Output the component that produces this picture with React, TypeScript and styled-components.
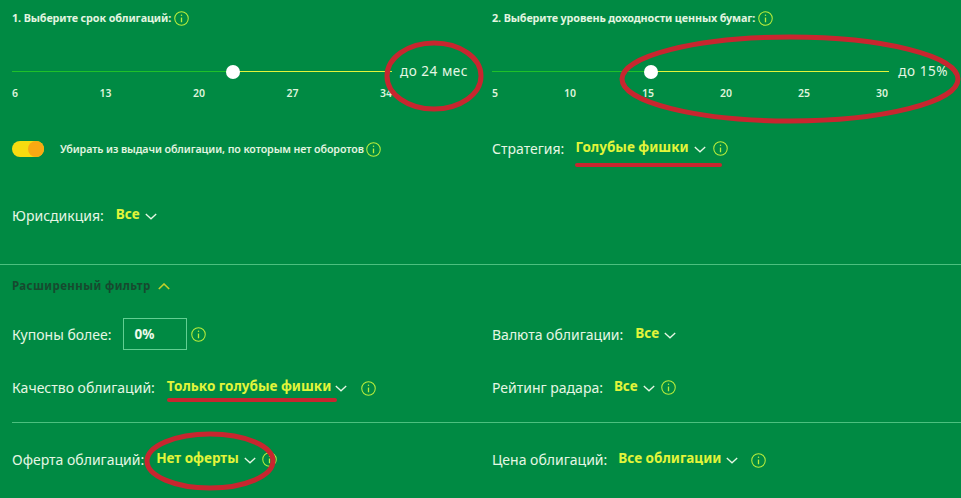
import React from "react";
import styled, { createGlobalStyle } from "styled-components";

const Global = createGlobalStyle`
  html, body { margin: 0; padding: 0; background: #008a43; }
  body { width: 961px; height: 498px; overflow: hidden; font-family: "Noto Sans", "Open Sans", sans-serif; }
`;

const Page = styled.div`
  position: relative;
  width: 961px;
  height: 498px;
  background: #008a43;
  color: #e6f7e4;
  overflow: hidden;
`;

const Columns = styled.div<{ $h: number }>`
  display: grid;
  grid-template-columns: 480px 481px;
  height: ${(p) => p.$h}px;
  padding-left: 12px;
  box-sizing: border-box;
`;

const Column = styled.div`
  display: flex;
  flex-direction: column;
  min-width: 0;
`;

const StepTitle = styled.div`
  display: flex;
  align-items: center;
  gap: 3px;
  height: 14px;
  margin-top: 11px;
  font-size: 10.8px;
  font-weight: 700;
  line-height: 14px;
  color: #e3f5e0;
  letter-spacing: -0.12px;
`;

const SliderRow = styled.div<{ $w: number }>`
  display: flex;
  align-items: center;
  height: 20px;
  margin-top: 36px;
  width: ${(p) => p.$w}px;
`;

const Track = styled.div`
  position: relative;
  flex: 1;
  height: 1px;
  margin-top: 1px;
  background: #e2f53a;
`;

const TrackFill = styled.div<{ $w: number }>`
  position: absolute;
  left: 0;
  top: 0;
  height: 1px;
  width: ${(p) => p.$w}px;
  background: #1fc02a;
`;

const Thumb = styled.div<{ $x: number }>`
  position: absolute;
  left: ${(p) => p.$x - 7}px;
  top: -6px;
  width: 14px;
  height: 14px;
  border-radius: 50%;
  background: #fff;
`;

const SliderValue = styled.div<{ $gap: number }>`
  margin-left: ${(p) => p.$gap}px;
  font-size: 13.5px;
  line-height: 20px;
  letter-spacing: 0.55px;
  white-space: nowrap;
  color: #e6f7e4;
`;

const Ticks = styled.div<{ $w: number }>`
  display: flex;
  justify-content: space-between;
  width: ${(p) => p.$w}px;
  height: 14px;
  margin-top: 5px;
`;

const Tick = styled.span`
  font-size: 10.5px;
  font-weight: 600;
  line-height: 14px;
  color: #dff3dc;
`;

const Row = styled.div<{ $top: number; $h?: number }>`
  display: flex;
  align-items: center;
  height: ${(p) => p.$h ?? 24}px;
  margin-top: ${(p) => p.$top}px;
  white-space: nowrap;
`;

const Toggle = styled.div`
  position: relative;
  width: 32px;
  height: 16px;
  border-radius: 8px;
  background: #f7dc10;
  margin-right: 16px;
`;

const ToggleKnob = styled.div`
  position: absolute;
  right: 0;
  top: 0;
  width: 16px;
  height: 16px;
  border-radius: 50%;
  background: #f9a913;
`;

const ToggleText = styled.span`
  font-size: 10.7px;
  font-weight: 600;
  letter-spacing: -0.1px;
  color: #e3f5e0;
`;

const Label = styled.span`
  font-size: 14px;
  color: #e6f7e4;
`;

const Value = styled.span<{ $ml: number }>`
  margin-left: ${(p) => p.$ml}px;
  margin-bottom: 2px;
  font-size: 13.5px;
  font-weight: 700;
  color: #e2f53a;
`;

const Chevron = styled.svg<{ $ml?: number }>`
  margin-left: ${(p) => p.$ml ?? 5}px;
  margin-top: 3px;
  flex: none;
`;

const InfoWrap = styled.svg<{ $ml: number; $mt?: number }>`
  margin-left: ${(p) => p.$ml}px;
  margin-top: ${(p) => p.$mt ?? 0}px;
  flex: none;
`;

const FullDivider = styled.div`
  height: 1px;
  background: #4cc07f;
`;

const InsetDivider = styled.div`
  height: 1px;
  margin-left: 12px;
  background: #4cc07f;
`;

const AdvancedTitle = styled.div`
  display: flex;
  align-items: center;
  height: 16px;
  margin: 12px 0 0 12px;
  font-size: 11.5px;
  font-weight: 700;
  letter-spacing: 0.4px;
  color: #17492f;
`;

const PercentInput = styled.div`
  box-sizing: border-box;
  width: 64px;
  height: 32px;
  margin-left: 12px;
  padding-left: 10px;
  border: 1px solid #62cf92;
  font-size: 13.5px;
  font-weight: 700;
  line-height: 30px;
  color: #eefaea;
`;

const Overlay = styled.svg`
  position: absolute;
  inset: 0;
  pointer-events: none;
`;

const Info = ({ ml, mt, size = 15, color = "#b9ee3c" }: { ml: number; mt?: number; size?: number; color?: string }) => (
  <InfoWrap $ml={ml} $mt={mt} width={size} height={size} viewBox="0 0 16 16" fill="none" stroke={color} strokeWidth="1.1">
    <circle cx="8" cy="8" r="7.2" />
    <path d="M8 7v5" strokeWidth="1.4" />
    <circle cx="8" cy="4.5" r="0.8" fill={color} stroke="none" />
  </InfoWrap>
);

const Down = ({ ml }: { ml?: number }) => (
  <Chevron $ml={ml} width="12" height="7" viewBox="0 0 12 7" fill="none" stroke="#e6f7e4" strokeWidth="1.3">
    <path d="M.8 1L6 5.800 11.200 1" />
  </Chevron>
);

const Up = () => (
  <Chevron $ml={7} width="12" height="7" viewBox="0 0 12 7" fill="none" stroke="#c2cf2a" strokeWidth="1.6">
    <path d="M.8 6L6 1l5.200 5" />
  </Chevron>
);

const Slider = ({ w, fill, value, gap, ticks, tickW }: { w: number; fill: number; value: string; gap: number; ticks: number[]; tickW: number }) => (
  <>
    <SliderRow $w={w}>
      <Track>
        <TrackFill $w={fill} />
        <Thumb $x={fill} />
      </Track>
      <SliderValue $gap={gap}>{value}</SliderValue>
    </SliderRow>
    <Ticks $w={tickW}>
      {ticks.map((t) => (
        <Tick key={t}>{t}</Tick>
      ))}
    </Ticks>
  </>
);

export default function App() {
  return (
    <Page>
      <Global />
      <Columns $h={264}>
        <Column>
          <StepTitle>1. Выберите срок облигаций: <Info ml={0} /></StepTitle>
          <Slider w={456} fill={221} value="до 24 мес" gap={8} ticks={[6, 13, 20, 27, 34]} tickW={380} />
          <Row $top={37}>
            <Toggle><ToggleKnob /></Toggle>
            <ToggleText>Убирать из выдачи облигации, по которым нет оборотов</ToggleText>
            <Info ml={2} />
          </Row>
          <Row $top={42}>
            <Label>Юрисдикция:</Label>
            <Value $ml={12}>Все</Value>
            <Down />
          </Row>
        </Column>
        <Column>
          <StepTitle>2. Выберите уровень доходности ценных бумаг: <Info ml={0} /></StepTitle>
          <Slider w={456} fill={159} value="до 15%" gap={9} ticks={[5, 10, 15, 20, 25, 30]} tickW={396} />
          <Row $top={36}>
            <Label>Стратегия:</Label>
            <Value $ml={11}>Голубые фишки</Value>
            <Down />
            <Info ml={7} />
          </Row>
        </Column>
      </Columns>
      <FullDivider />
      <AdvancedTitle>Расширенный фильтр <Up /></AdvancedTitle>
      <Columns $h={129}>
        <Column>
          <Row $top={25} $h={32}>
            <Label>Купоны более:</Label>
            <PercentInput>0%</PercentInput>
            <Info ml={4} />
          </Row>
          <Row $top={25}>
            <Label>Качество облигаций:</Label>
            <Value $ml={12}>Только голубые фишки</Value>
            <Down ml={4} />
            <Info ml={14} mt={2} />
          </Row>
        </Column>
        <Column>
          <Row $top={29}>
            <Label>Валюта облигации:</Label>
            <Value $ml={12}>Все</Value>
            <Down />
          </Row>
          <Row $top={29}>
            <Label>Рейтинг радара:</Label>
            <Value $ml={11}>Все</Value>
            <Down />
            <Info ml={6} />
          </Row>
        </Column>
      </Columns>
      <InsetDivider />
      <Columns $h={75}>
        <Column>
          <Row $top={24}>
            <Label>Оферта облигаций:</Label>
            <Value $ml={12}>Нет оферты</Value>
            <Down />
            <Info ml={6} />
          </Row>
        </Column>
        <Column>
          <Row $top={24}>
            <Label>Цена облигаций:</Label>
            <Value $ml={11}>Все облигации</Value>
            <Down />
            <Info ml={13} mt={2} />
          </Row>
        </Column>
      </Columns>
      <Overlay width="961" height="498" viewBox="0 0 961 498" fill="none" stroke="#c8262f">
        <ellipse cx="434" cy="76" rx="47" ry="33" strokeWidth="5" />
        <ellipse cx="790" cy="79" rx="168" ry="42" strokeWidth="5" />
        <ellipse cx="210" cy="461" rx="63" ry="27" strokeWidth="5" />
        <path d="M577 165h143" strokeWidth="4" strokeLinecap="round" />
        <path d="M169 400h166" strokeWidth="4" strokeLinecap="round" />
      </Overlay>
    </Page>
  );
}
